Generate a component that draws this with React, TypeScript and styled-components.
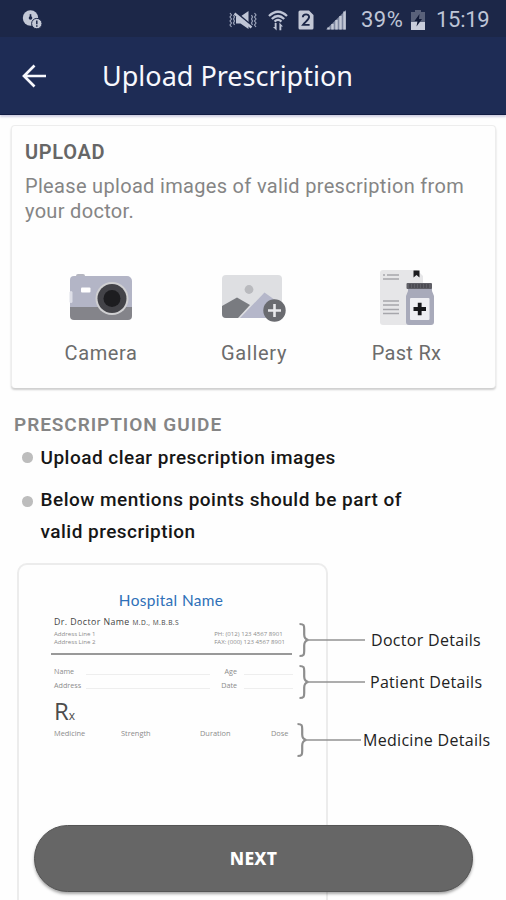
import React from "react";
import styled, { createGlobalStyle } from "styled-components";

const GlobalStyle = createGlobalStyle`
  * { box-sizing: border-box; }
  body { margin: 0; background: #fefefe; }
`;

const Screen = styled.div`
  position: relative;
  width: 506px;
  height: 900px;
  overflow: hidden;
  background: #fefefe;
  font-family: Roboto, "Liberation Sans", sans-serif;
`;

const StatusBar = styled.div`
  height: 37px;
  padding: 3px 16px 0 22px;
  display: flex;
  align-items: center;
  background: #1c2748;
  color: #bfc5d6;
`;

const StatusIcons = styled.div`
  display: flex;
  align-items: center;
  margin-left: auto;
`;

const StatusIcon = styled.svg<{ $gap?: number }>`
  display: block;
  flex: none;
  margin-right: ${(p) => p.$gap ?? 0}px;
`;

const StatusText = styled.span<{ $width: number; $spacing: number }>`
  width: ${(p) => p.$width}px;
  font-size: 22px;
  line-height: 28px;
  letter-spacing: ${(p) => p.$spacing}px;
  white-space: nowrap;
`;

const AppBar = styled.header`
  height: 78px;
  padding-left: 22px;
  display: flex;
  align-items: center;
  background: #1e2c55;
  border-bottom: 1px solid #111c43;
  box-shadow: 0 2px 2px #cfcfe2;
`;

const Title = styled.h1`
  margin: 0 0 0 55px;
  font: 400 27px/36px "Noto Sans", sans-serif;
  letter-spacing: 0;
  color: #f7f8fd;
  white-space: nowrap;
`;

const Card = styled.section`
  margin: 10px 10px 0 11px;
  height: 263px;
  padding: 13px 13px 0;
  border: 1px solid #ededed;
  border-bottom: 0;
  border-radius: 4px;
  background: #fefefe;
  box-shadow: 0 2px 2px #cfcfcf;
`;

const CardTitle = styled.h2`
  margin: 0 0 9px;
  font-size: 20px;
  line-height: 26px;
  font-weight: 600;
  letter-spacing: 0.7px;
  color: #666;
`;

const CardText = styled.p`
  margin: 0;
  font-size: 20px;
  line-height: 24.5px;
  letter-spacing: 0.32px;
  color: #858585;
  white-space: nowrap;
`;

const Sources = styled.div`
  display: grid;
  grid-template-columns: 152px 154px 151px;
  margin-top: 46px;
`;

const Source = styled.button`
  display: flex;
  flex-direction: column;
  align-items: center;
  padding: 0;
  border: 0;
  background: none;
  font-family: inherit;
`;

const SourceArt = styled.svg`
  display: block;
  width: 66px;
  height: 60px;
`;

const SourceLabel = styled.span<{ $spacing: number }>`
  margin-top: 11px;
  font-size: 20px;
  line-height: 26px;
  letter-spacing: ${(p) => p.$spacing}px;
  color: #6c6c6c;
`;

const GuideTitle = styled.h2`
  margin: 25px 0 0 14px;
  font-size: 19px;
  line-height: 24px;
  font-weight: 600;
  letter-spacing: 0.94px;
  color: #858585;
`;

const Bullets = styled.ul`
  margin: 5px 0 0 22px;
  padding: 0;
  list-style: none;
`;

const Bullet = styled.li<{ $dot: number }>`
  display: flex;
  align-items: flex-start;
  gap: 8px;
  margin-bottom: 9.5px;
  &::before {
    content: "";
    flex: none;
    width: 10.5px;
    height: 10.5px;
    margin-top: ${(p) => p.$dot}px;
    border-radius: 50%;
    background: #bdbdbd;
  }
`;

const BulletText = styled.div`
  font-size: 19px;
  line-height: 32px;
  font-weight: 500;
  color: #161616;
`;

const BulletLine = styled.div`
  letter-spacing: 0.48px;
  white-space: nowrap;
`;

const Preview = styled.div`
  display: flex;
  margin: 15px 0 0 17px;
  font-family: "Open Sans", "Noto Sans", sans-serif;
`;

const Sheet = styled.div`
  flex: none;
  width: 311px;
  height: 380px;
  padding: 24px 34px 0 34px;
  border: 2px solid #ececec;
  border-radius: 10px;
  color: #8c8c8c;
`;

const Hospital = styled.div`
  font: 400 15.4px/22px Lato, sans-serif;
  letter-spacing: 0.35px;
  text-align: center;
  padding-right: 3px;
  color: #2e70b8;
`;

const Doctor = styled.div`
  margin-top: 4px;
  padding-left: 1px;
  font-size: 8.8px;
  line-height: 14px;
  font-weight: 500;
  letter-spacing: 0.42px;
  color: #444;
  white-space: nowrap;
  small { font-size: 6.6px; letter-spacing: 0.45px; }
`;

const Contact = styled.div`
  display: flex;
  justify-content: space-between;
  font-size: 6.1px;
  line-height: 8px;
  padding: 0 7px 7px 1px;
  white-space: nowrap;
`;

const Divider = styled.div`
  height: 2px;
  margin: 0 0 0 -2px;
  background: #999;
`;

const Fields = styled.div`
  display: grid;
  grid-template-columns: 32px 124px 13px 21px 49px;
  padding: 9px 0 0 1px;
  font-size: 7.2px;
  line-height: 14.5px;
`;

const FieldName = styled.span<{ $right?: boolean }>`
  text-align: ${(p) => (p.$right ? "right" : "left")};
  margin-left: ${(p) => (p.$right ? "-12px" : "0")};
  padding-right: ${(p) => (p.$right ? "7px" : "0")};
  grid-column: ${(p) => (p.$right ? "3 / span 2" : "auto")};
`;

const Blank = styled.span`
  height: 11px;
  border-bottom: 1px solid #eee;
`;

const Rx = styled.div`
  margin-top: 4px;
  padding-left: 1px;
  font-size: 24px;
  line-height: 27px;
  color: #4c4c4c;
  small { font-size: 12px; }
`;

const Columns = styled.div`
  display: grid;
  grid-template-columns: 67px 79px 71px 20px;
  margin-top: -2px;
  padding-left: 1px;
  font-size: 7.4px;
  line-height: 12px;
`;

const Callouts = styled.div`
  flex: none;
  margin-left: -31px;
  padding-top: 59px;
`;

const Callout = styled.div<{ $after: number; $shift: number }>`
  display: flex;
  align-items: center;
  height: 36px;
  margin-bottom: ${(p) => p.$after}px;
  margin-left: ${(p) => p.$shift}px;
`;

const CalloutText = styled.span<{ $gap: number }>`
  margin-left: ${(p) => p.$gap}px;
  font-size: 16px;
  line-height: 22px;
  letter-spacing: 0.3px;
  color: #222;
  white-space: nowrap;
`;

const NextButton = styled.button`
  position: absolute;
  left: 34px;
  bottom: 8px;
  width: 439px;
  height: 67px;
  padding: 0 0 2px;
  border: 1px solid #555;
  border-radius: 34px;
  background: #666;
  color: #fff;
  font: 800 17.5px/24px "Noto Sans", sans-serif;
  letter-spacing: 0.2px;
  box-shadow: 0 2px 3px rgba(0, 0, 0, 0.35);
`;

const DiscIcon = () => (
  <StatusIcon width="21" height="20" viewBox="0 0 21 20">
    <circle cx="8.5" cy="8" r="7.7" fill="#c3c8d6" />
    <circle cx="8.5" cy="8" r="1.8" fill="#1c2748" />
    <path d="M8.5 8V4.2" stroke="#1c2748" strokeWidth="1.6" fill="none" />
    <circle cx="14.8" cy="13.6" r="5.2" fill="#c3c8d6" stroke="#1c2748" strokeWidth="1" />
    <path d="M14.8 10.4v3.8M14.8 15.3v1.5" stroke="#1c2748" strokeWidth="1.5" />
  </StatusIcon>
);

const MuteIcon = () => (
  <StatusIcon width="28" height="20" viewBox="0 0 28 20" $gap={11}>
    <path d="M7 6.5h4.5l8-5.5v18l-8-5.5H7z" fill="#bfc5d6" />
    <path d="M6.5 2l16 13.5" stroke="#1c2748" strokeWidth="1.8" />
    <path d="M5.5 3.5l17 14" stroke="#bfc5d6" strokeWidth="2.4" />
    <path
      d="M1 3l1.5 2L1 7l1.5 2L1 11l1.5 2L1 15l1.5 2M4.5 5l1 2-1 2 1 2-1 2 1 2M22.5 5l1 2-1 2 1 2-1 2 1 2M25.5 3L27 5l-1.5 2L27 9l-1.5 2 1.5 2-1.5 2 1.5 2"
      stroke="#9ba3b9"
      strokeWidth="1.2"
      fill="none"
    />
  </StatusIcon>
);

const WifiIcon = () => (
  <StatusIcon width="20" height="21" viewBox="0 0 20 21" $gap={10}>
    <path d="M1 6Q10-2.5 19 6M3.8 9Q10 3 16.2 9M6.6 11.6Q10 8 13.4 11.6" stroke="#bfc5d6" strokeWidth="2.3" fill="none" />
    <path d="M8.6 20.5l-3.6-3.6h1.7V13h1.9v7.5zM11.4 12.6l3.6 3.8h-1.7v3.9h-1.9z" fill="#bfc5d6" />
  </StatusIcon>
);

const SimIcon = () => (
  <StatusIcon width="16" height="20" viewBox="0 0 16 20" $gap={12}>
    <path d="M2 0.5h9l4.5 4.5v13a1.5 1.5 0 0 1-1.5 1.5H2A1.5 1.5 0 0 1 .5 18V2A1.5 1.5 0 0 1 2 .5z" fill="#c3c8d6" />
    <path d="M4.8 7.2c.2-3.8 6.3-3.7 6.3-.2 0 2.5-3.6 4.6-6.1 7.9h6.6" stroke="#1c2748" strokeWidth="1.9" fill="none" />
  </StatusIcon>
);

const SignalIcon = () => (
  <StatusIcon width="20" height="20" viewBox="0 0 20 20" $gap={15}>
    <path d="M0 19.5L20 0v19.5z" fill="#7d869f" />
    <path d="M2.5 19.5v-2M6.5 19.5v-5.5M10.5 19.5v-9.5M14.5 19.5v-13.5M18.5 19.5V1.5" stroke="#c3c8d6" strokeWidth="2.4" />
  </StatusIcon>
);

const BatteryIcon = () => (
  <StatusIcon width="14" height="20" viewBox="0 0 14 20" $gap={11}>
    <path d="M4 0h6v2h4v18H0V2h4z" fill="#59617a" />
    <path d="M0 12h14v8H0z" fill="#c9cddb" />
    <path d="M8.5 4L3.5 11h3L5.5 16.5l5.5-7.5H8z" fill="#111a37" />
  </StatusIcon>
);

const CameraArt = () => (
  <SourceArt viewBox="0 0 66 60">
    <rect x="8" y="5" width="9" height="4" rx="2" fill="#b5b6c0" />
    <path d="M2 11a4 4 0 0 1 4-4h53a5 5 0 0 1 5 5v27H2z" fill="#b3b5c6" />
    <path d="M2 38h62v9a4 4 0 0 1-4 4H6a4 4 0 0 1-4-4z" fill="#84848a" />
    <rect x="1.5" y="22" width="3" height="12" rx="1.5" fill="#dedfe8" />
    <rect x="13" y="18.5" width="9.5" height="5" rx="1" fill="#fff" />
    <circle cx="44" cy="29.5" r="16.5" fill="#d0d0d2" />
    <circle cx="44" cy="29.5" r="14.5" fill="#434348" />
    <circle cx="44" cy="29.5" r="8.5" fill="#1d1d20" />
  </SourceArt>
);

const GalleryArt = () => (
  <SourceArt viewBox="0 0 66 60">
    <path d="M5 6h52a4 4 0 0 1 4 4v35a4 4 0 0 1-4 4H5a4 4 0 0 1-4-4V10a4 4 0 0 1 4-4z" fill="#dedfe2" />
    <circle cx="28" cy="20.5" r="4.4" fill="#b9babe" />
    <path d="M19 49L43.5 23.5 61 36v9a4 4 0 0 1-4 4z" fill="#b5b7ca" />
    <path d="M1 37l15-8.5L29 36 17 49H5a4 4 0 0 1-4-4z" fill="#797b80" />
    <circle cx="53.5" cy="41.5" r="11.2" fill="#6a6b70" />
    <path d="M47 41.5h13M53.5 35v13" stroke="#e9e9ec" strokeWidth="2.6" />
  </SourceArt>
);

const PastRxArt = () => (
  <SourceArt viewBox="0 0 66 60">
    <path d="M9 1h34l6 6v49H9a3 3 0 0 1-3-3V4a3 3 0 0 1 3-3z" fill="#e6e6e8" />
    <path d="M9 6h2M13 6h12M9 10h16M9 32h16M9 36h16M9 40.5h16M9 44.5h16" stroke="#a6a6ab" strokeWidth="1.4" />
    <path d="M39.5 1.5h6v7l-3-2.4-3 2.4z" fill="#1c1c1f" />
    <path d="M34 18h24v4l2 5v26a3 3 0 0 1-3 3H35a3 3 0 0 1-3-3V27l2-5z" fill="#a8aaba" />
    <rect x="32.5" y="14" width="25.5" height="6" rx="1" fill="#5f5f66" />
    <path d="M36 15v4M39 15v4M42 15v4M45 15v4M48 15v4M51 15v4M54 15v4" stroke="#3d3d43" />
    <rect x="36" y="29" width="19.5" height="22" rx="1" fill="#eeeef2" />
    <path d="M39.5 40h12.5M45.7 33.7v12.6" stroke="#17171a" strokeWidth="3.8" />
  </SourceArt>
);

const Brace = ({ line }: { line: number }) => (
  <svg width={10 + line} height="36" viewBox={`0 0 ${10 + line} 36`}>
    <path d="M.5 2C5 2 5.2 3.5 5.2 7v5.5c0 3 .8 4.7 4 5.5-3.2.8-4 2.5-4 5.5V29c0 3.5-.2 5-4.7 5" stroke="#8e8e8e" strokeWidth="2.2" fill="none" />
    <path d={`M8 18H${10 + line}`} stroke="#929292" strokeWidth="1.6" />
  </svg>
);

export default function App() {
  return (
    <Screen>
      <GlobalStyle />
      <StatusBar>
        <DiscIcon />
        <StatusIcons>
          <MuteIcon />
          <WifiIcon />
          <SimIcon />
          <SignalIcon />
          <StatusText $width={50} $spacing={0.5}>39%</StatusText>
          <BatteryIcon />
          <StatusText $width={54} $spacing={-0.3}>15:19</StatusText>
        </StatusIcons>
      </StatusBar>
      <AppBar>
        <svg width="25" height="24" viewBox="0 0 25 24">
          <path d="M24 12H2.5M12.5 1.5L2 12l10.5 10.5" stroke="#f7f8fd" strokeWidth="2.7" fill="none" />
        </svg>
        <Title>Upload Prescription</Title>
      </AppBar>

      <Card>
        <CardTitle>UPLOAD</CardTitle>
        <CardText>Please upload images of valid prescription from</CardText>
        <CardText>your doctor.</CardText>
        <Sources>
          <Source>
            <CameraArt />
            <SourceLabel $spacing={0.6}>Camera</SourceLabel>
          </Source>
          <Source>
            <GalleryArt />
            <SourceLabel $spacing={0.7}>Gallery</SourceLabel>
          </Source>
          <Source>
            <PastRxArt />
            <SourceLabel $spacing={0.3}>Past Rx</SourceLabel>
          </Source>
        </Sources>
      </Card>

      <GuideTitle>PRESCRIPTION GUIDE</GuideTitle>
      <Bullets>
        <Bullet $dot={10}>
          <BulletText>
            <BulletLine>Upload clear prescription images</BulletLine>
          </BulletText>
        </Bullet>
        <Bullet $dot={12.5}>
          <BulletText>
            <BulletLine>Below mentions points should be part of</BulletLine>
            <BulletLine>valid prescription</BulletLine>
          </BulletText>
        </Bullet>
      </Bullets>

      <Preview>
        <Sheet>
          <Hospital>Hospital Name</Hospital>
          <Doctor>
            Dr. Doctor Name <small>M.D., M.B.B.S</small>
          </Doctor>
          <Contact>
            <div>
              Address Line 1<br />
              Address Line 2
            </div>
            <div>
              PH: (012) 123 4567 8901
              <br />
              FAX: (000) 123 4567 8901
            </div>
          </Contact>
          <Divider />
          <Fields>
            <FieldName>Name</FieldName>
            <Blank />
            <FieldName $right>Age</FieldName>
            <Blank />
            <FieldName>Address</FieldName>
            <Blank />
            <FieldName $right>Date</FieldName>
            <Blank />
          </Fields>
          <Rx>
            R<small>x</small>
          </Rx>
          <Columns>
            <span>Medicine</span>
            <span>Strength</span>
            <span>Duration</span>
            <span>Dose</span>
          </Columns>
        </Sheet>
        <Callouts>
          <Callout $after={6} $shift={2}>
            <Brace line={56} />
            <CalloutText $gap={6}>Doctor Details</CalloutText>
          </Callout>
          <Callout $after={22} $shift={2}>
            <Brace line={56} />
            <CalloutText $gap={5}>Patient Details</CalloutText>
          </Callout>
          <Callout $after={0} $shift={0}>
            <Brace line={54} />
            <CalloutText $gap={2}>Medicine Details</CalloutText>
          </Callout>
        </Callouts>
      </Preview>

      <NextButton>NEXT</NextButton>
    </Screen>
  );
}
